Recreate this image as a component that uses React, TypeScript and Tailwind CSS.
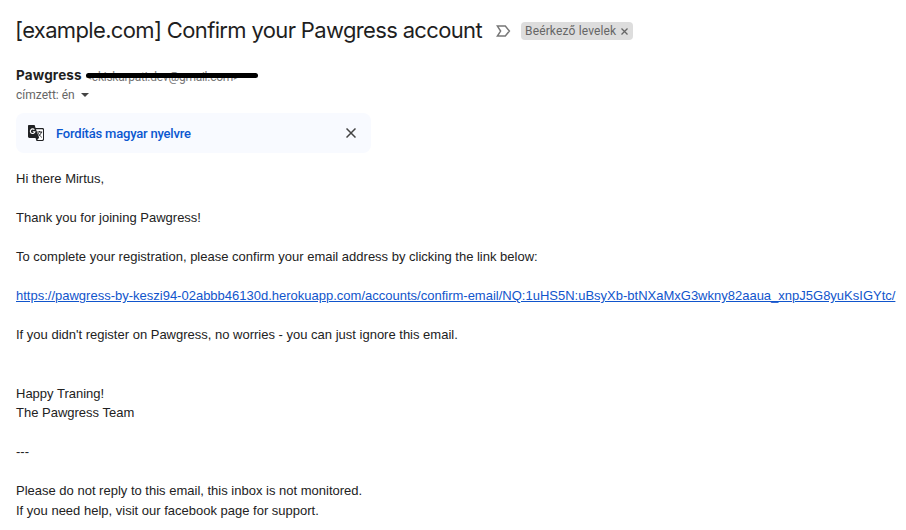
function ImportanceMarker() {
  return (
    <svg className="ml-[13px] h-5 w-5 shrink-0" viewBox="0 0 20 20" fill="none" stroke="#777" strokeWidth="1.5">
      <path d="M4.400 5.100h7.900l4.100 5-4.100 5H4.400l3.200-5z" />
    </svg>
  );
}

function TranslateIcon() {
  return (
    <svg className="h-5 w-5 shrink-0" viewBox="0 0 20 20">
      <path d="M2.8 2h5.8l1 3.1h7c.8 0 1.4.6 1.4 1.4v10.1c0 .8-.6 1.4-1.4 1.4h-6.1l-1-3.1H3.4c-.8 0-1.4-.6-1.4-1.4V3.4C2 2.600 2.200 2 2.800 2z" fill="#202124" />
      <path d="M10 6.200h6.300c.4 0 .7.3.7.7v9.200c0 .5-.3.800-.7.800h-5.100l1.900-2.200z" fill="#fff" />
      <path d="M8.400 6.700a2.300 2.300 0 1 0 .5 2.100H6.800" fill="none" stroke="#fff" strokeWidth="1.100" />
      <path d="M11.200 9h5M13.600 8v1M15.400 9c-.4 1.800-1.700 3.200-2.900 4.100M12.200 10.200c.7 1.500 1.800 2.700 3.500 4.100" fill="none" stroke="#202124" />
    </svg>
  );
}

export default function App() {
  return (
    <main className="h-[530px] w-[906px] overflow-hidden bg-white px-4 font-['Liberation_Sans',Arial,sans-serif] text-[13px] leading-[19.5px] text-[#222]">
      <header className="flex h-[62px] items-center">
        <h1 className="-ml-px w-[465px] whitespace-nowrap font-['Inter',sans-serif] text-[22px] tracking-[-0.65px] text-[#1f1f1f]">[example.com] Confirm your Pawgress account</h1>
        <ImportanceMarker />
        <span className="ml-2 flex h-[18px] w-28 items-center gap-[5px] rounded bg-[#ddd] pl-1 font-['Roboto',sans-serif] text-xs tracking-[0.15px] whitespace-nowrap text-[#666]">
          Beérkező levelek
          <svg className="mt-px h-[7px] w-[7px]" viewBox="0 0 7 7" stroke="#666" strokeWidth="1.300"><path d="m.5.500 6 6m0-6-6 6" /></svg>
        </span>
      </header>
      <section className="h-[51px] pt-[3px] font-['Roboto',sans-serif]">
        <div className="flex h-5 items-center">
          <strong className="w-[70px] pt-0.5 font-['Inter',sans-serif] text-[13.500px] font-bold tracking-[0.15px] text-[#1f1f1f]">Pawgress</strong>
          <span className="relative h-5 w-[174px] pt-[3px] text-xs leading-[19px] tracking-[-0.25px] whitespace-nowrap text-[#777]">
            &lt;ckiskarpati.dev@gmail.com&gt;
            <span className="absolute top-[8px] left-0 h-[5px] w-[172px] rounded-full bg-black" />
          </span>
        </div>
        <div className="flex h-5 items-center text-xs text-[#666]">
          címzett: én
          <span className="ml-1.5 border-x-4 border-t-4 border-x-transparent border-t-[#444]" />
        </div>
      </section>
      <aside className="flex h-10 w-[355px] items-center rounded-lg bg-[#f8faff] pl-2.5">
        <TranslateIcon />
        <a className="ml-2.5 pt-0.5 font-['Roboto',sans-serif] text-[13px] font-medium tracking-[-0.2px] text-[#0b57d0]">Fordítás magyar nyelvre</a>
        <svg className="mr-[15px] ml-auto h-2.5 w-2.5" viewBox="0 0 10 10" stroke="#444" strokeWidth="1.500"><path d="m.5.500 9 9m0-9-9 9" /></svg>
      </aside>
      <article className="whitespace-nowrap pt-4">
        <p className="mb-[19.5px]">Hi there Mirtus,</p>
        <p className="mb-[19.5px]">Thank you for joining Pawgress!</p>
        <p className="mb-[19.5px]">To complete your registration, please confirm your email address by clicking the link below:</p>
        <p className="mb-[19.5px]"><a className="text-[#15c] underline">https://pawgress-by-keszi94-02abbb46130d.herokuapp.com/accounts/confirm-email/NQ:1uHS5N:uBsyXb-btNXaMxG3wkny82aaua_xnpJ5G8yuKsIGYtc/</a></p>
        <p className="mb-[39px]">If you didn't register on Pawgress, no worries - you can just ignore this email.</p>
        <p className="mb-[19.5px]">Happy Traning!<br />The Pawgress Team</p>
        <p className="mb-[19.5px]">---</p>
        <p>Please do not reply to this email, this inbox is not monitored.<br />If you need help, visit our facebook page for support.</p>
      </article>
    </main>
  );
}
